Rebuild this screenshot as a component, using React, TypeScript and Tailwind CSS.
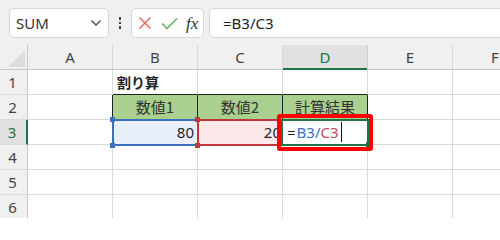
import React from "react";

const cols = ["A", "B", "C", "D", "E", "F"];

function Cell({ className = "", children }: { className?: string; children?: React.ReactNode }) {
  return (
    <div className={`relative box-border border-r border-b border-[#dadada] h-[25px] flex items-center text-[15px] text-[#222] ${className}`}>
      {children}
    </div>
  );
}

export default function App() {
  return (
    <div className="w-[500px] h-[218px] overflow-hidden bg-white relative" style={{ fontFamily: '"Noto Sans", "Noto Sans CJK JP", sans-serif' }}>
      {/* toolbar */}
      <div className="h-[45px] bg-[#f0f0f0] flex items-start pt-[8px] pl-[9px]">
        <div className="w-[100px] h-[30px] bg-white border border-[#d6d6d6] rounded-[5px] flex items-center justify-between pl-[6px] pr-[6px] box-border">
          <span className="text-[15px] text-[#333]" style={{ fontFamily: '"Noto Sans", sans-serif' }}>SUM</span>
          <svg width="12" height="8" viewBox="0 0 12 8"><path d="M1.5 1.5 L6 6 L10.5 1.5" fill="none" stroke="#444" strokeWidth="1.3" /></svg>
        </div>
        <div className="w-[22px] h-[30px] flex flex-col items-center justify-center gap-[2px]">
          <div className="w-[2.5px] h-[2.5px] bg-[#444]" />
          <div className="w-[2.5px] h-[2.5px] bg-[#444]" />
          <div className="w-[2.5px] h-[2.5px] bg-[#444]" />
        </div>
        <div className="w-[73px] h-[30px] bg-white border border-[#d6d6d6] rounded-[5px] flex items-center box-border pl-[6px] gap-[9px]">
          <svg width="14" height="14" viewBox="0 0 14 14"><path d="M1.5 1.5 L12.5 12.5 M12.5 1.5 L1.5 12.5" stroke="#e46a6a" strokeWidth="1.5" fill="none" /></svg>
          <svg width="17" height="13" viewBox="0 0 17 13"><path d="M1 6.5 L6 11.5 L16 1.5" stroke="#5fb25f" strokeWidth="1.5" fill="none" /></svg>
          <span className="text-[17px] italic text-[#333] leading-none -ml-[1px]" style={{ fontFamily: '"Liberation Serif", serif' }}>fx</span>
        </div>
        <div className="ml-[5px] flex-1 h-[30px] bg-white border border-r-0 border-[#d6d6d6] rounded-l-[5px] flex items-center pl-[13px] box-border">
          <span className="text-[15px] text-[#222]" style={{ fontFamily: '"Noto Sans", sans-serif' }}>=B3/C3</span>
        </div>
      </div>

      {/* grid */}
      <div className="grid w-max grid-cols-[28px_85px_85px_85px_85px_85px_85px] auto-rows-[25px] bg-[#f0f0f0]">
        {/* header row */}
        <div className="relative box-border border-r border-b border-[#c8c8c8] h-[25px] bg-[#f0f0f0]">
          <svg className="absolute left-[8px] top-[5px]" width="17" height="17" viewBox="0 0 17 17"><path d="M17 0 L17 17 L0 17 Z" fill="#dcdcdc" /></svg>
        </div>
        {cols.map((c) => (
          <div
            key={c}
            className={`relative box-border border-r border-b h-[25px] flex items-center justify-center text-[15px] ${c === "D" ? "bg-[#e1e1e1] text-[#217346] border-r-[#d0d0d0] border-b-[#c8c8c8]" : "bg-[#f0f0f0] text-[#444] border-r-[#d8d8d8] border-b-[#c8c8c8]"}`}
          >
            {c}
            {c === "D" && <div className="absolute left-0 right-0 bottom-[-2px] h-[3px] bg-[#217346]" />}
          </div>
        ))}

        {[1, 2, 3, 4, 5, 6].map((r) => (
          <React.Fragment key={r}>
            <div
              className={`relative box-border border-r border-b h-[25px] flex items-center justify-center text-[15px] ${r === 3 ? "bg-[#e1e1e1] text-[#217346] border-r-[#217346] border-r-[2px]" : "bg-[#f0f0f0] text-[#444] border-r-[#c8c8c8]"} border-b-[#dadada]`}
            >
              <span className="pr-[2px]">{r}</span>
            </div>
            {r === 1 && (
              <>
                <Cell className="bg-white" />
                <Cell className="bg-white border-b-[#222] pl-[4px]">
                  <span className="font-bold text-[14px]" style={{ fontFamily: '"Noto Sans CJK JP", sans-serif' }}>割り算</span>
                </Cell>
                <Cell className="bg-white border-b-[#222]" />
                <Cell className="bg-white border-b-[#222]" />
                <Cell className="bg-white" />
                <Cell className="bg-white" />
              </>
            )}
            {r === 2 && (
              <>
                <Cell className="bg-white border-r-[#222]" />
                {["数値1", "数値2", "計算結果"].map((t) => (
                  <Cell key={t} className="bg-[#a9d08e] border-r-[#222] border-b-[#222] justify-center">
                    <span className="text-[15px] text-[#333]" style={{ fontFamily: '"Noto Sans CJK JP", sans-serif' }}>{t}</span>
                  </Cell>
                ))}
                <Cell className="bg-white" />
                <Cell className="bg-white" />
              </>
            )}
            {r === 3 && (
              <>
                <Cell className="bg-white" />
                <Cell className="bg-[#e9eff9] justify-end pr-[3px]">
                  <span className="text-[15px]">80</span>
                  <div className="absolute left-[-1px] top-[-1px] w-[87px] h-[27px] border-2 border-[#3a6fc4] z-10 pointer-events-none" />
                  <div className="absolute left-[-3px] top-[-3px] w-[5px] h-[5px] bg-[#3a6fc4] z-20" />
                  <div className="absolute left-[-3px] bottom-[-4px] w-[5px] h-[5px] bg-[#3a6fc4] z-20" />
                </Cell>
                <Cell className="bg-[#fbe9e9] justify-end pr-[1px]">
                  <span className="text-[15px]">20</span>
                  <div className="absolute left-[-1px] top-[-1px] w-[87px] h-[27px] border-2 border-[#c4363c] z-10 pointer-events-none" />
                  <div className="absolute left-[-3px] top-[-3px] w-[5px] h-[5px] bg-[#c4363c] z-20" />
                  <div className="absolute left-[-3px] bottom-[-4px] w-[5px] h-[5px] bg-[#c4363c] z-20" />
                </Cell>
                <Cell className="bg-white pl-[4px] z-30">
                  <span className="text-[15px] text-[#222]" style={{ fontFamily: '"Noto Sans", sans-serif' }}>=</span>
                  <span className="text-[15px] text-[#3a6fc4] ml-[1px]" style={{ fontFamily: '"Noto Sans", sans-serif' }}>B3/</span>
                  <span className="text-[15px] text-[#c8475c]" style={{ fontFamily: '"Noto Sans", sans-serif' }}>C3</span>
                  <div className="w-[1.5px] h-[20px] bg-[#111] ml-[2px]" />
                  <div className="absolute left-[-2px] top-[-1px] w-[88px] h-[27px] border-2 border-[#217346] pointer-events-none" />
                  <div className="absolute right-[-4px] bottom-[-3px] w-[5px] h-[5px] bg-[#217346]" />
                  <div className="absolute left-[-6px] top-[-6px] w-[96px] h-[37px] border-[4px] border-[#ff0000] rounded-[3px] pointer-events-none" />
                </Cell>
                <Cell className="bg-white" />
                <Cell className="bg-white" />
              </>
            )}
            {r > 3 && (
              <>
                {[0, 1, 2, 3, 4, 5].map((i) => (
                  <Cell key={i} className="bg-white" />
                ))}
              </>
            )}
          </React.Fragment>
        ))}
      </div>
    </div>
  );
}
